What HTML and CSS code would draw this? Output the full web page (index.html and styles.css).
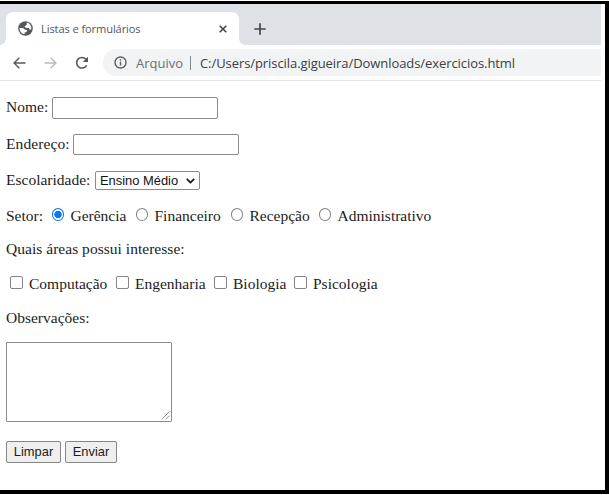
FILE: index.html
```html
<!DOCTYPE html>
<html lang="pt-BR">
<head>
<meta charset="utf-8">
<title>Listas e formulários</title>
<link rel="stylesheet" href="styles.css">
</head>
<body>
<div class="window">
  <div class="tabs">
    <div class="tab">
      <svg class="globe" viewBox="0 0 14 14"><circle cx="7" cy="7" r="6.8" fill="#54585d"/><path d="M8.2 1.5 C11 2 12.6 4.3 12.5 7.6 L11.2 8.4 L10.2 6.6 L7.2 6.4 L6 5.2 L8.2 3.6Z M1.4 6.5 L4.6 6.5 L6.6 8.1 L8.6 8.5 L8 10.3 L6.3 10.8 L6 12.4 C3.4 12 1.4 9.6 1.4 6.5Z" fill="#fff"/></svg>
      <span class="tab-title">Listas e formulários</span>
      <svg class="close" viewBox="0 0 8 8"><path d="M.7 .7 7.3 7.3M7.3 .7 .7 7.3" stroke="#44474b" stroke-width="1.6"/></svg>
    </div>
    <svg class="plus" viewBox="0 0 12 12"><path d="M6 .3V11.7M.3 6H11.7" stroke="#44474b" stroke-width="1.7"/></svg>
  </div>
  <div class="toolbar">
    <svg class="arrow" viewBox="0 0 13 12"><path d="M12.5 6H1.2M6.3 .8 1.1 6l5.2 5.2" fill="none" stroke="#55595e" stroke-width="1.4"/></svg>
    <svg class="arrow forward" viewBox="0 0 13 12"><path d="M.5 6H11.8M6.7 .8 11.9 6l-5.2 5.2" fill="none" stroke="#b9bbbe" stroke-width="1.4"/></svg>
    <svg class="reload" viewBox="0 0 14 14"><path d="M11.6 9.3A5.3 5.3 0 1 1 11 3.3" fill="none" stroke="#55595e" stroke-width="1.6"/><path d="M13 .8V6H7.8Z" fill="#55595e"/></svg>
    <div class="address">
      <svg class="info" viewBox="0 0 13 13"><circle cx="6.5" cy="6.5" r="5.5" fill="none" stroke="#5b5f64" stroke-width="1.4"/><path d="M6.5 5.8V9.6M6.5 3.3V4.7" stroke="#5b5f64" stroke-width="1.4"/></svg>
      <span class="scheme">Arquivo</span>
      <span class="divider"></span>
      <span class="url">C:/Users/priscila.gigueira/Downloads/exercicios.html</span>
    </div>
  </div>
  <form class="page">
    <div class="row name"><label class="l-name" for="nome">Nome:</label><input class="field" id="nome" type="text"></div>
    <div class="row street"><label class="l-street" for="end">Endereço:</label><input class="field short" id="end" type="text"></div>
    <div class="row school"><span class="l-school">Escolaridade:</span><div class="select">Ensino Médio<svg class="chevron" viewBox="0 0 9 6"><path d="M.8 .9 4.5 4.5 8.2 .9" fill="none" stroke="#111" stroke-width="1.7"/></svg></div></div>
    <div class="row sector"><span class="l-sector">Setor:</span>
      <input class="radio" type="radio" name="setor" checked><span class="o1">Gerência</span>
      <input class="radio" type="radio" name="setor"><span class="o2">Financeiro</span>
      <input class="radio" type="radio" name="setor"><span class="o3">Recepção</span>
      <input class="radio" type="radio" name="setor"><span class="o4">Administrativo</span></div>
    <div class="row question">Quais áreas possui interesse:</div>
    <div class="row areas">
      <input class="check" type="checkbox"><span class="c1">Computação</span>
      <input class="check" type="checkbox"><span class="c2">Engenharia</span>
      <input class="check" type="checkbox"><span class="c3">Biologia</span>
      <input class="check" type="checkbox"><span class="c4">Psicologia</span></div>
    <div class="row notes">Observações:</div>
    <div class="textarea"><svg class="grip" viewBox="0 0 9 9"><path d="M.5 8.5 8.5 .5M4.7 8.5 8.5 4.7" stroke="#8b8b8b" stroke-width=".9"/></svg></div>
    <div class="buttons"><button class="btn clear" type="reset">Limpar</button><button class="btn send" type="button">Enviar</button></div>
  </form>
</div>
</body>
</html>
```
FILE: styles.css
```css
* { box-sizing: border-box; }
body { margin: 0; background: #fff; overflow: hidden; }
svg { display: block; flex: none; }
.window {
  width: 609px; height: 493px; margin-top: 1px;
  border: solid #000; border-width: 3px 4px 4px 0;
  background: #fff;
}
.tabs {
  display: flex; width: 601px; height: 41px; padding: 8px 0 0 6px;
  background: #dee1e6;
}
.tab {
  position: relative; display: flex; align-items: center;
  width: 233px; height: 33px; padding-left: 12px;
  border-radius: 7px 7px 0 0; background: #fff;
}
.tab::before, .tab::after {
  content: ""; position: absolute; bottom: 0; width: 6px; height: 6px;
}
.tab::before { left: -6px; background: radial-gradient(circle at 0 0, transparent 5.5px, #fff 6px); }
.tab::after { right: -6px; background: radial-gradient(circle at 100% 0, transparent 5.5px, #fff 6px); }
.globe { width: 15px; height: 15px; }
.tab-title {
  width: 178px; margin-left: 8px; white-space: nowrap;
  font: 11.1px/16px "Open Sans", sans-serif; color: #54575b; letter-spacing: -.1px;
}
.close { width: 8px; height: 8px; }
.plus { width: 12px; height: 12px; margin: 11px 0 0 15px; }
.toolbar {
  display: flex; align-items: center; width: 601px; height: 36px;
  padding-left: 13px; border-bottom: 1px solid #e3e4e6;
}
.arrow { width: 13px; height: 12px; }
.forward { margin-left: 18px; }
.reload { width: 14px; height: 14px; margin-left: 18px; }
.address {
  display: flex; align-items: center; width: 498px; height: 27px;
  margin-left: 14px; padding-left: 11px;
  border-radius: 13px 0 0 13px; background: #f1f3f4;
  font: 13px/18px "Open Sans", sans-serif; white-space: nowrap;
}
.info { width: 13px; height: 13px; }
.scheme { width: 47px; margin-left: 9px; color: #6b6f74; }
.divider { width: 1px; height: 14px; margin-left: 7px; background: #85888c; }
.url { margin-left: 9px; color: #3c4043; letter-spacing: -.07px; }

.page { padding: 17px 0 0 6px; font: 15.5px/18px "Liberation Serif", serif; color: #1c1c1c; }
.row { display: flex; align-items: flex-start; height: 18px; white-space: nowrap; }
.row span, .row label { flex: none; }
.street { margin-top: 19px; }
.school, .sector { margin-top: 18px; }
.question { margin-top: 15px; }
.areas { margin-top: 17px; padding-left: 4px; }
.notes { margin-top: 16px; }
.l-name { width: 46px; }
.l-street { width: 67px; letter-spacing: .1px; }
.l-school { width: 89px; }
.l-sector { width: 45.5px; }
.field {
  width: 166px; height: 22px; margin: -1px 0 0; padding: 1px 2px;
  border: 1px solid #8b8b8b; border-radius: 2px; background: #fff;
}
.short { height: 21px; }
.select {
  display: flex; align-items: center; width: 105px; height: 19px; padding-left: 4px;
  border: 1px solid #8b8b8b; border-radius: 2px;
  font: 12.9px/17px "Liberation Sans", sans-serif; color: #111;
}
.chevron { width: 9px; height: 6px; margin-left: 8px; }
.radio, .check {
  flex: none; appearance: none; width: 12.5px; height: 13px; margin: 1px 6.5px 0 0;
  border: 1px solid #858585; background: #fff;
}
.radio { border-radius: 50%; }
.radio:checked { border-color: #0b75ff; background: radial-gradient(circle, #0b75ff 3.4px, #fff 4px); }
.check { border-radius: 2px; }
.question { letter-spacing: .03px; }
.o1 { width: 65px; }
.o2 { width: 76px; }
.o3 { width: 69px; }
.c1 { width: 87px; }
.c2 { width: 79px; }
.c3 { width: 61px; }
.textarea {
  display: flex; align-items: flex-end; justify-content: flex-end;
  width: 166px; height: 80px; margin-top: 15px; padding: 1px;
  border: 1px solid #8b8b8b; border-radius: 1px;
}
.grip { width: 9px; height: 9px; }
.buttons { display: flex; gap: 4px; margin-top: 19px; }
.btn {
  height: 22px; padding: 0; border: 1px solid #858585; border-radius: 2px;
  background: #efefef; color: #1c1c1c; font: 12.9px/18px "Liberation Sans", sans-serif;
}
.clear { width: 55px; }
.send { width: 52px; }
```
